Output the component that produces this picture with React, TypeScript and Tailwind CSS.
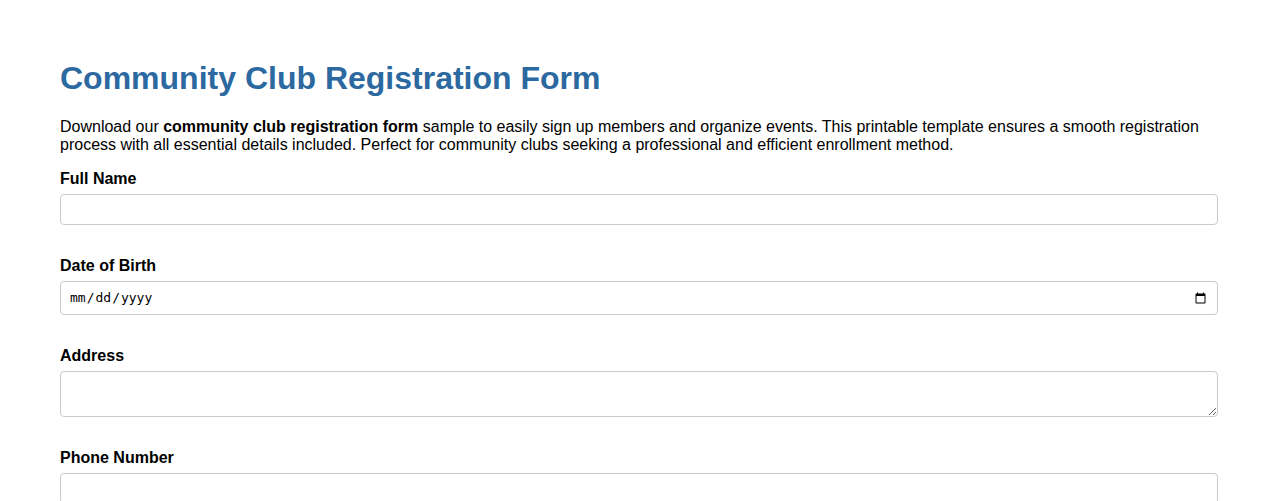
export default function App() {
  return (
    <div className="min-h-screen bg-white px-[60px] pt-[60px] font-['Liberation_Sans',Arial,sans-serif] text-black">
      <h1 className="mb-[21px] text-[32px] font-bold leading-[37px] text-[#2c69a0]">
        Community Club Registration Form
      </h1>
      <p className="mb-4 text-base leading-[18px]">
        Download our <strong>community club registration form</strong> sample to easily sign up members and organize
        events. This printable template ensures a smooth registration process with all essential details included.
        Perfect for community clubs seeking a professional and efficient enrollment method.
      </p>

      <form className="flex flex-col">
        <div className="mb-8">
          <label htmlFor="fullName" className="mb-[6px] block text-base font-bold leading-[18px]">
            Full Name
          </label>
          <input
            id="fullName"
            type="text"
            className="block h-[31px] w-full rounded-[4px] border border-[#ccc] px-2 text-sm outline-none"
          />
        </div>

        <div className="mb-8">
          <label htmlFor="dob" className="mb-[6px] block text-base font-bold leading-[18px]">
            Date of Birth
          </label>
          <input
            id="dob"
            type="date"
            className="block h-[34px] w-full rounded-[4px] border border-[#ccc] px-2 font-['DejaVu_Sans_Mono',monospace] text-[13px] outline-none"
          />
        </div>

        <div className="mb-8">
          <label htmlFor="address" className="mb-[6px] block text-base font-bold leading-[18px]">
            Address
          </label>
          <textarea
            id="address"
            className="block h-[46px] w-full rounded-[4px] border border-[#ccc] p-2 text-sm outline-none"
          />
        </div>

        <div className="mb-8">
          <label htmlFor="phone" className="mb-[6px] block text-base font-bold leading-[18px]">
            Phone Number
          </label>
          <input
            id="phone"
            type="tel"
            className="block h-[31px] w-full rounded-[4px] border border-[#ccc] px-2 text-sm outline-none"
          />
        </div>
      </form>
    </div>
  );
}
